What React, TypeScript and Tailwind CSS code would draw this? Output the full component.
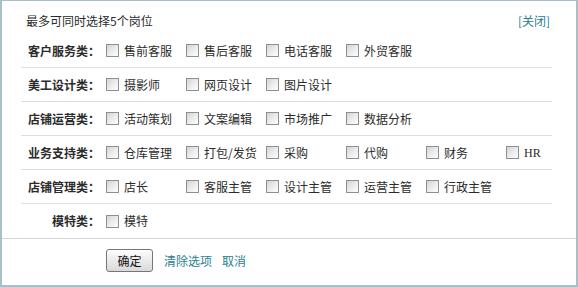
const groups: { label: string; items: string[] }[] = [
  { label: "客户服务类：", items: ["售前客服", "售后客服", "电话客服", "外贸客服"] },
  { label: "美工设计类：", items: ["摄影师", "网页设计", "图片设计"] },
  { label: "店铺运营类：", items: ["活动策划", "文案编辑", "市场推广", "数据分析"] },
  { label: "业务支持类：", items: ["仓库管理", "打包/发货", "采购", "代购", "财务", "HR"] },
  { label: "店铺管理类：", items: ["店长", "客服主管", "设计主管", "运营主管", "行政主管"] },
  { label: "模特类：", items: ["模特"] },
];

const Checkbox = () => (
  <span className="w-[13px] h-[13px] shrink-0 border border-[#8c9092] bg-gradient-to-br from-[#d4d4d4] via-[#ececec] to-[#fdfdfd]" />
);

export default function App() {
  return (
    <div className="w-[578px] h-[287px] bg-white border-t border-l-2 border-r-2 border-b-2 border-[#a8bfcc] flex flex-col text-[12px] leading-[14px] text-[#2b2b2b] font-['Noto_Sans_CJK_SC',sans-serif]">
      {/* header */}
      <div className="h-[33px] pt-[6px] pl-[24px] pr-[26px] flex items-center justify-between">
        <span>最多可同时选择5个岗位</span>
        <a className="text-[#2a8090] cursor-pointer">[关闭]</a>
      </div>

      {/* groups */}
      <div className="ml-[19px] mr-[24px]">
        {groups.map((g, i) => (
          <div
            key={g.label}
            className={`h-[34px] flex items-center ${i < groups.length - 1 ? "border-b border-[#dcdfe1]" : "h-[33px]"}`}
          >
            <span className="w-[85px] pr-[6px] text-right font-bold shrink-0">{g.label}</span>
            <div className="grid grid-cols-[repeat(6,80px)]">
              {g.items.map((it) => (
                <label key={it} className="flex items-center gap-[5px]">
                  <Checkbox />
                  <span className={it === "HR" ? "font-['Liberation_Serif',serif] text-[12px]" : ""}>{it}</span>
                </label>
              ))}
            </div>
          </div>
        ))}
      </div>

      {/* footer */}
      <div className="flex-1 border-t border-[#d3d9dc] pt-[10px] pl-[104px] flex items-start gap-[11px]">
        <button className="w-[47px] h-[23px] border border-[#767676] rounded-[3px] bg-gradient-to-b from-[#fdfdfd] to-[#d9d9d9] text-[#111]">
          确定
        </button>
        <div className="h-[23px] flex items-center gap-[10px] text-[#2a8090]">
          <a className="cursor-pointer">清除选项</a>
          <a className="cursor-pointer">取消</a>
        </div>
      </div>
    </div>
  );
}
